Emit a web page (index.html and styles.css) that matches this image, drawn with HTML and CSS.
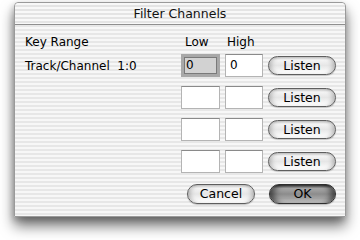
FILE: index.html
```html
<!DOCTYPE html>
<html>
<head>
<meta charset="utf-8">
<link rel="stylesheet" href="styles.css">
</head>
<body>
<div class="window">
  <div class="titlebar">Filter Channels</div>
  <div class="content">
    <div class="grid header">
      <div class="label">Key Range</div>
      <div class="col-low">Low</div>
      <div class="col-high">High</div>
      <div></div>
    </div>
    <div class="grid rows">
      <div class="label">Track/Channel&nbsp; 1:0</div>
      <div class="field focused">0</div>
      <div class="field">0</div>
      <div class="btn">Listen</div>

      <div class="label"></div>
      <div class="field"></div>
      <div class="field"></div>
      <div class="btn">Listen</div>

      <div class="label"></div>
      <div class="field"></div>
      <div class="field"></div>
      <div class="btn">Listen</div>

      <div class="label"></div>
      <div class="field"></div>
      <div class="field"></div>
      <div class="btn">Listen</div>
    </div>
    <div class="actions">
      <div class="btn cancel">Cancel</div>
      <div class="btn default">OK</div>
    </div>
  </div>
</div>
</body>
</html>
```

FILE: styles.css
```css
html, body {
  margin: 0;
  padding: 0;
  background: #ffffff;
}
body {
  width: 360px;
  height: 240px;
  overflow: hidden;
  font-family: "DejaVu Sans", "Liberation Sans", sans-serif;
  font-size: 12px;
  color: #000;
}
.window {
  margin: 2px 0 0 14px;
  width: 332px;
  height: 215px;
  box-sizing: border-box;
  border: 1px solid #9a9a9a;
  border-radius: 4px 4px 0 0;
  background: repeating-linear-gradient(to bottom, #f7f7f7 0 2px, #e7e7e7 2px 4px);
  box-shadow: 0 9px 14px rgba(0,0,0,0.55), -1px 3px 6px rgba(0,0,0,0.2);
}
.titlebar {
  height: 21px;
  line-height: 21px;
  text-align: center;
  font-size: 12.5px;
  color: #111;
  border-bottom: 1px solid #8e8e8e;
  border-radius: 4px 4px 0 0;
  background: repeating-linear-gradient(to bottom, #f8f8f8 0 2px, #e4e4e4 2px 4px);
}
.content {
  padding: 10px 9px 0 10px;
}
.grid {
  display: grid;
  grid-template-columns: 1fr 39px 38px 68px;
  column-gap: 5px;
}
.header {
  line-height: 15px;
  margin-bottom: 4px;
}
.col-low { padding-left: 4px; }
.col-high { padding-left: 2px; }
.rows {
  row-gap: 9px;
  grid-auto-rows: 23px;
  align-items: center;
}
.field {
  height: 23px;
  box-sizing: border-box;
  background: #fff;
  border: 1px solid #b4b4b4;
  border-top-color: #8a8a8a;
  line-height: 21px;
  padding-left: 4px;
}
.field.focused {
  background: #d2d2d2;
  border: 3px solid #a8a8a8;
  box-shadow: inset 0 0 0 1px #7a7a7a;
  line-height: 17px;
  padding-left: 2px;
}
.btn {
  height: 19px;
  box-sizing: border-box;
  border: 1px solid #5e5e5e;
  border-radius: 10px;
  text-align: center;
  line-height: 17px;
  font-size: 12.5px;
  color: #000;
  background: linear-gradient(to bottom, #c8c8c8 0%, #f4f4f4 18%, #e6e6e6 50%, #f4f4f4 75%, #ffffff 100%);
  box-shadow: inset 5px 0 5px -3px rgba(0,0,0,0.25), inset -5px 0 5px -3px rgba(0,0,0,0.25), 0 1px 1px rgba(0,0,0,0.2);
}
.actions {
  display: flex;
  justify-content: flex-end;
  gap: 14px;
  margin-top: 11px;
}
.actions .btn {
  height: 20px;
  line-height: 18px;
}
.cancel { width: 68px; }
.default {
  width: 67px;
  border-color: #2e2e2e;
  background: linear-gradient(to bottom, #3a3a3a 0%, #a8a8a8 18%, #8c8c8c 50%, #a4a4a4 75%, #d4d4d4 100%);
  box-shadow: inset 7px 0 6px -3px rgba(0,0,0,0.55), inset -7px 0 6px -3px rgba(0,0,0,0.55), 0 1px 1px rgba(0,0,0,0.25);
}
```
